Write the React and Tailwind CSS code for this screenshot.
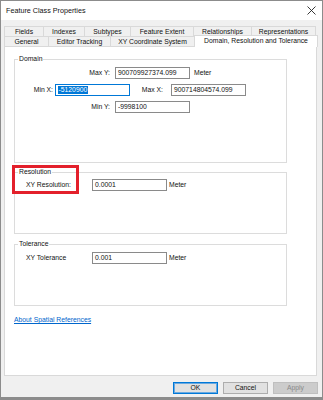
import React from 'react';

const topTabs = [
  { label: 'Fields', w: 'w-[40px]' },
  { label: 'Indexes', w: 'w-[42px]' },
  { label: 'Subtypes', w: 'w-[47px]' },
  { label: 'Feature Extent', w: 'w-[64px]' },
  { label: 'Relationships', w: 'w-[59px]' },
  { label: 'Representations', w: 'w-[65px]' },
];

const bottomTabs = [
  { label: 'General', w: 'w-[45px]' },
  { label: 'Editor Tracking', w: 'w-[63px]' },
  { label: 'XY Coordinate System', w: 'w-[85px]' },
];

function Field({ children, focused }) {
  return (
    <div
      className={`w-[75px] h-[12px] bg-white flex items-center pl-[2px] border ${
        focused ? 'border-[#0078d7]' : 'border-[#8a8a8a]'
      }`}
    >
      {children}
    </div>
  );
}

function GroupBox({ title, className, children }) {
  return (
    <fieldset className={`w-[273px] border border-[#dcdcdc] ${className}`}>
      <legend className="ml-[3px] px-[1px] leading-[8px]">{title}</legend>
      {children}
    </fieldset>
  );
}

function Button({ children, variant }) {
  const styles = {
    default: 'bg-[#e1e1e1] border-[#0078d7] shadow-[inset_0_0_0_1px_#6aa9e0]',
    normal: 'bg-[#e1e1e1] border-[#adadad]',
    disabled: 'bg-[#cccccc] border-[#bfbfbf] text-[#8a8a8a]',
  };
  return (
    <div className={`w-[45px] h-[12px] border flex items-center justify-center ${styles[variant]}`}>
      {children}
    </div>
  );
}

export default function App() {
  return (
    <div className="w-[323px] h-[400px] flex flex-col bg-[#f0f0f0] border-x border-t border-b-[3px] border-[#8c8c8c] text-[6.8px] leading-[8px] text-[#111] font-['Liberation_Sans',Arial,sans-serif]">
      {/* title bar */}
      <div className="h-[19px] shrink-0 bg-white flex items-center justify-between pl-[5px] pr-[5px]">
        <span className="text-[7.2px]">Feature Class Properties</span>
        <svg width="9" height="9" viewBox="0 0 9 9" className="mr-[1px]">
          <path d="M0.5 0.5 L8.5 8.5 M8.5 0.5 L0.5 8.5" stroke="#222" strokeWidth="0.9" />
        </svg>
      </div>

      {/* tabs */}
      <div className="ml-[3px] mt-[6px] flex flex-col">
        <div className="flex">
          {topTabs.map((t, i) => (
            <div
              key={t.label}
              className={`${t.w} h-[11px] border border-[#d9d9d9] flex items-center justify-center ${
                i === 0 ? '' : '-ml-px'
              }`}
            >
              {t.label}
            </div>
          ))}
        </div>
        <div className="flex items-start h-[11px] -mt-px">
          {bottomTabs.map((t, i) => (
            <div
              key={t.label}
              className={`${t.w} h-[11px] border border-[#d9d9d9] flex items-center justify-center ${
                i === 0 ? '' : '-ml-px'
              }`}
            >
              {t.label}
            </div>
          ))}
          <div className="w-[124px] h-[12px] -mt-px -ml-px relative z-10 bg-white border-x border-t border-[#d9d9d9] flex items-center justify-center pb-[1px]">
            Domain, Resolution and Tolerance
          </div>
        </div>

        {/* tab page */}
        <div className="w-[313px] h-[330px] -mt-px bg-white border border-[#d9d9d9] pl-[9px] pt-[8px]">
          <GroupBox title="Domain" className="h-[108px]">
            <div className="pt-[4px] flex flex-col gap-[5px]">
              <div className="flex items-center h-[12px]">
                <div className="w-[95px] text-right">Max Y:</div>
                <div className="ml-[5px]">
                  <Field>900709927374.099</Field>
                </div>
                <div className="ml-[4px]">Meter</div>
              </div>
              <div className="flex items-center h-[12px]">
                <div className="w-[38px] text-right">Min X:</div>
                <div className="ml-[2px]">
                  <Field focused>
                    <span className="bg-[#0078d7] text-white px-[0.5px]">-5120900</span>
                  </Field>
                </div>
                <div className="w-[33px] text-right">Max X:</div>
                <div className="ml-[8px]">
                  <Field>900714804574.099</Field>
                </div>
              </div>
              <div className="flex items-center h-[12px]">
                <div className="w-[95px] text-right">Min Y:</div>
                <div className="ml-[5px]">
                  <Field>-9998100</Field>
                </div>
              </div>
            </div>
          </GroupBox>

          <div className="relative mt-[5px]">
            <GroupBox title="Resolution" className="h-[66px]">
              <div className="pt-[3px] flex items-center h-[15px]">
                <div className="w-[77px] pl-[11px]">XY Resolution:</div>
                <Field>0.0001</Field>
                <div className="ml-[2px]">Meter</div>
              </div>
            </GroupBox>
            <div className="absolute left-[-2px] top-[-3px] w-[67px] h-[29px] border-[3px] border-[#e3202b]" />
          </div>

          <GroupBox title="Tolerance" className="h-[66px] mt-[6px]">
            <div className="pt-[4px] flex items-center h-[16px]">
              <div className="w-[77px] pl-[11px]">XY Tolerance</div>
              <Field>0.001</Field>
              <div className="ml-[2px]">Meter</div>
            </div>
          </GroupBox>

          <a href="#" className="block mt-[10px] w-max text-[#0066cc] underline">
            About Spatial References
          </a>
        </div>
      </div>

      {/* buttons */}
      <div className="flex justify-end gap-[5px] mt-[6px] pr-[4px]">
        <Button variant="default">OK</Button>
        <Button variant="normal">Cancel</Button>
        <Button variant="disabled">Apply</Button>
      </div>
    </div>
  );
}
